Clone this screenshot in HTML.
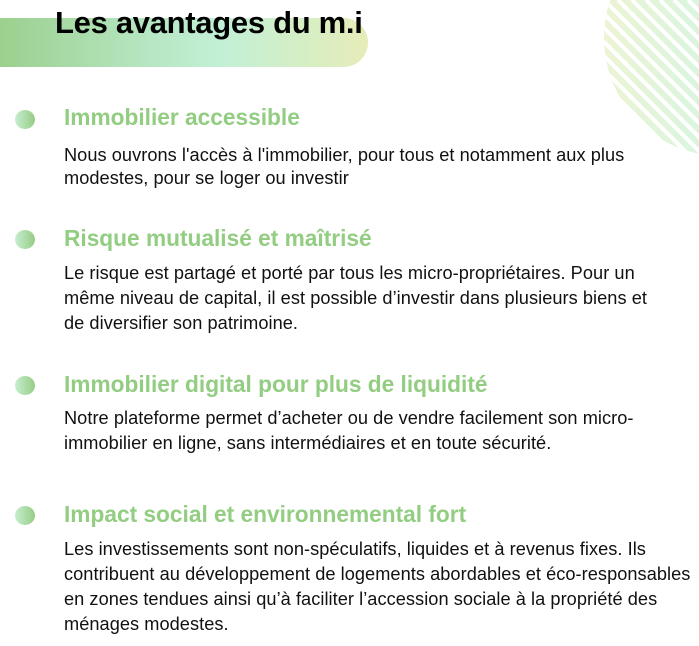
<!DOCTYPE html>
<html><head><meta charset="utf-8"><style>
body{margin:0;width:699px;height:646px;background:#fff;position:relative;overflow:hidden;font-family:"Liberation Sans",Arial,sans-serif;}
.bar{position:absolute;left:0;top:18px;width:368px;height:49px;border-radius:0 25px 25px 0;background:linear-gradient(90deg,#9bd08e 0%,#b6e6c2 40%,#c2f0d6 60%,#e6ecb8 100%);}
h1{position:absolute;left:55px;top:5px;margin:0;font-size:31px;font-weight:bold;color:#000;white-space:nowrap;letter-spacing:-0.3px}
.dot{position:absolute;left:15px;width:20px;height:19px;border-radius:50%;background:linear-gradient(90deg,#c6eece,#96cc86);}
.t{position:absolute;left:64px;margin:0;font-size:22.7px;font-weight:bold;color:#92cd82;white-space:nowrap}
.p{position:absolute;left:64px;margin:0;font-size:18.2px;line-height:25px;color:#111;white-space:nowrap;letter-spacing:0.05px}
</style></head><body>
<svg style="position:absolute;left:0;top:0" width="699" height="646">
<defs>
<clipPath id="c"><circle cx="722" cy="38" r="118"/></clipPath>
<linearGradient id="g" x1="0" y1="0" x2="1" y2="0"><stop offset="0" stop-color="#eef4d2"/><stop offset="1" stop-color="#d8f5e0"/></linearGradient>
</defs>
<g clip-path="url(#c)"><rect x="590" y="-10" width="120" height="180" fill="url(#g)"/>
<g stroke="#fff" stroke-width="4">
<line x1="380" y1="0" x2="580" y2="200"/><line x1="394" y1="0" x2="594" y2="200"/><line x1="408" y1="0" x2="608" y2="200"/><line x1="422" y1="0" x2="622" y2="200"/><line x1="436" y1="0" x2="636" y2="200"/><line x1="450" y1="0" x2="650" y2="200"/><line x1="464" y1="0" x2="664" y2="200"/><line x1="478" y1="0" x2="678" y2="200"/><line x1="492" y1="0" x2="692" y2="200"/><line x1="506" y1="0" x2="706" y2="200"/><line x1="520" y1="0" x2="720" y2="200"/><line x1="534" y1="0" x2="734" y2="200"/><line x1="548" y1="0" x2="748" y2="200"/><line x1="562" y1="0" x2="762" y2="200"/><line x1="576" y1="0" x2="776" y2="200"/><line x1="590" y1="0" x2="790" y2="200"/><line x1="604" y1="0" x2="804" y2="200"/><line x1="618" y1="0" x2="818" y2="200"/><line x1="632" y1="0" x2="832" y2="200"/><line x1="646" y1="0" x2="846" y2="200"/><line x1="660" y1="0" x2="860" y2="200"/><line x1="674" y1="0" x2="874" y2="200"/><line x1="688" y1="0" x2="888" y2="200"/>
</g></g>
</svg>
<div class="bar"></div>
<h1>Les avantages du m.i</h1>

<div class="dot" style="top:110px"></div>
<p class="t" style="top:104px">Immobilier accessible</p>
<p class="p" style="top:144px;line-height:23px">Nous ouvrons l'accès à l'immobilier, pour tous et notamment aux plus<br>modestes, pour se loger ou investir</p>

<div class="dot" style="top:230px"></div>
<p class="t" style="top:225px">Risque mutualisé et maîtrisé</p>
<p class="p" style="top:261px">Le risque est partagé et porté par tous les micro-propriétaires. Pour un<br>même niveau de capital, il est possible d’investir dans plusieurs biens et<br>de diversifier son patrimoine.</p>

<div class="dot" style="top:376px"></div>
<p class="t" style="top:371px">Immobilier digital pour plus de liquidité</p>
<p class="p" style="top:406px">Notre plateforme permet d’acheter ou de vendre facilement son micro-<br>immobilier en ligne, sans intermédiaires et en toute sécurité.</p>

<div class="dot" style="top:506px"></div>
<p class="t" style="top:501px">Impact social et environnemental fort</p>
<p class="p" style="top:537px">Les investissements sont non-spéculatifs, liquides et à revenus fixes. Ils<br>contribuent au développement de logements abordables et éco-responsables<br>en zones tendues ainsi qu’à faciliter l’accession sociale à la propriété des<br>ménages modestes.</p>
</body></html>
